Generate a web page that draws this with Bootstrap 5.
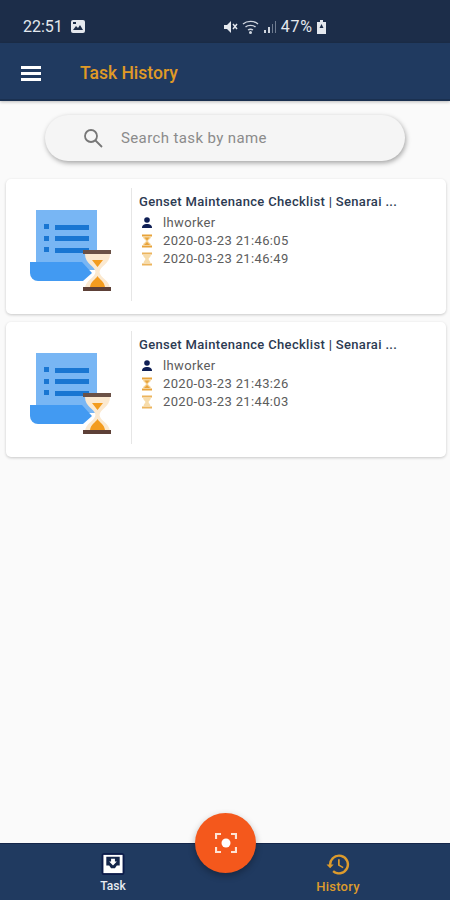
<!DOCTYPE html>
<html>
<head>
    <title>Task History</title>
    <link rel="stylesheet" href="https://cdn.jsdelivr.net/npm/bootstrap@5.3.0/dist/css/bootstrap.min.css">
    <style>
        html, body { height: 100%; }
        body { background: #fafafa; font-family: Roboto, "Liberation Sans", sans-serif; overflow: hidden; }
        .app-shell { height: 900px; }
        .status-strip { height: 43px; background: #1c2d49; color: #e4e8ee; font-size: 16px; padding: 10px 0 0 23px; }
        .status-right { margin-left: 138px; }
        .status-pct { font-size: 16px; letter-spacing: .7px; margin-left: 5px; }
        .app-bar { height: 58px; background: #203a60; padding: 4px 0 0 21px; border-bottom: 2px solid #1a3050; box-shadow: 0 1px 3px rgba(0,0,0,.25); }
        .app-title { color: #e09a26; font-size: 17.5px; font-weight: 500; margin-left: 39px; }
        .search-pill { width: 360px; height: 46px; margin: 14px auto 18px; background: #f5f5f5; border-radius: 23px; box-shadow: 1px 2px 5px rgba(0,0,0,.35); padding-left: 38px; }
        .search-input { background: transparent; border: 0; padding: 0; margin-left: 18px; font-size: 15px; letter-spacing: .38px; box-shadow: none; }
        .search-input::placeholder { color: #8b8b8b; }
        .task-card { width: 440px; height: 135px; margin: 0 0 8px 6px; border: 0; border-radius: 5px; box-shadow: 0 1px 3px rgba(0,0,0,.2); background: #fff; }
        .task-art { width: 125px; padding: 29px 0 0 22px; }
        .task-info { margin: 9px 0 13px; padding: 5px 0 0 7px; border-left: 1px solid #e6e6e6; }
        .task-name { color: #2c3a52; font-size: 13px; font-weight: 500; letter-spacing: .33px; line-height: 18px; margin-bottom: 3px; white-space: nowrap; }
        .task-line { color: #5c5c5c; font-size: 13px; letter-spacing: .35px; line-height: 18px; gap: 10px; padding-left: 2px; }
        .bottom-bar { height: 57px; margin-top: auto; background: #203a60; border-top: 1px solid #14264a; }
        .tab-item { width: 50%; font-size: 12px; font-weight: 500; color: #e8ecf2; padding-top: 9px; line-height: 15px; }
        .tab-label { margin-top: 4px; }
        .tab-task { margin-left: 88px; width: 50px; }
        .tab-history { margin-left: 175px; width: 50px; color: #dd9b2c; font-size: 13px; letter-spacing: .25px; }
        .tab-history .tab-label { margin-top: 3px; }
        .scan-fab { position: absolute; left: 195px; top: 813px; width: 61px; height: 60px; padding: 0; border: 0; border-radius: 50%; background: #f4581c; box-shadow: 0 3px 7px rgba(0,0,0,.3); }
    </style>
</head>
<body>
    <svg width="0" height="0" class="position-absolute">
        <symbol id="glassStart" viewBox="0 0 12 14">
            <path d="M1 .5h10v2H1zM1 11.500h10v2H1z" fill="#e8a33a"/>
            <path d="M2 2.500h8c0 2.500-2.500 3-3 4.500.5 1.500 3 2 3 4.500H2c0-2.500 2.500-3 3-4.500-.5-1.500-3-2-3-4.500z" fill="#f6d498"/>
            <path d="M3.500 3.500h5L6 6.500zM3 11l3-3 3 3z" fill="#e8a33a"/>
        </symbol>
        <symbol id="glassEnd" viewBox="0 0 12 14">
            <path d="M1 .5h10v2H1zM1 11.500h10v2H1z" fill="#ecb45c"/>
            <path d="M2 2.500h8c0 2.500-2 3-2.500 4.500.5 1.500 2 2 2 4.500h-7c0-2.500 1.500-3 2-4.500C4 5.500 2 5 2 2.500z" fill="#f7dcaa"/>
        </symbol>
        <symbol id="taskArt" viewBox="0 0 86 86">
            <path d="M8 2h61v60H8z" fill="#78b6f4"/>
            <path d="M2 54h52l10 11-9 8H10a8 8 0 0 1-8-8z" fill="#429af2"/>
            <path d="M16 16h5v5h-5zM16 28h5v5h-5zM16 39h5v5h-5zM27 17h34v5H27zM27 28h34v5H27zM27 40h34v5H27z" fill="#1976d2"/>
            <path d="M57 46h25c0 10-10 12-10.500 18 .5 6 10.500 8 10.500 17H57c0-9 10-11 10.500-17-.5-6-10.500-8-10.500-18z" fill="#fbe9d0"/>
            <path d="M64 52h11l-5.500 7zM62 79c1-6 5-7 7.500-11 2.500 4 6.500 5 7.500 11z" fill="#f39c1f"/>
            <path d="M55 42h28v4H55z" fill="#6b5146"/>
            <path d="M55 79h28v4H55z" fill="#5d4037"/>
        </symbol>
    </svg>

    <div class="app-shell d-flex flex-column">
        <div class="status-strip d-flex align-items-center">
            <span>22:51</span>
            <svg class="ms-2" width="14" height="13" viewBox="0 0 14 13"><rect width="14" height="13" rx="2" fill="#e4e8ee"/><path d="M2 10l3-4 2 2 2-3 3 5z" fill="#1c2d49"/><rect x="2" y="2" width="3" height="2" fill="#1c2d49"/></svg>
            <div class="status-right d-flex align-items-center">
                <svg width="15" height="14" viewBox="0 0 15 14"><path d="M1 5h3l4-4v12L4 9H1z" fill="#e4e8ee"/><path d="M10 4l4 5M14 4l-4 5" stroke="#e4e8ee" stroke-width="1.500"/></svg>
                <svg class="ms-1" width="17" height="14" viewBox="0 0 17 14" fill="none" stroke="#cfd5de" stroke-width="1.400"><path d="M1 4c4-3.500 11-3.500 15 0M3.500 7c2.500-2.200 7.500-2.200 10 0M6 10c1.500-1 3.500-1 5 0"/><circle cx="8.500" cy="12.500" r=".8" fill="#cfd5de"/></svg>
                <svg class="ms-1" width="13" height="13" viewBox="0 0 13 13"><path d="M1 10h2v3H1zM5 7h2v6H5z" fill="#cfd5de"/><path d="M9 4h1v9H9zM12 1h1v12h-1z" fill="#6f7c90"/></svg>
                <span class="status-pct">47%</span>
                <svg class="ms-1" width="9" height="14" viewBox="0 0 9 14"><path d="M3 0h3v2h3v12H0V2h3z" fill="#e4e8ee"/><path d="M4.500 4 2.500 8h4z" fill="#1c2d49"/></svg>
            </div>
        </div>

        <nav class="app-bar navbar flex-nowrap justify-content-start">
            <svg width="20" height="15" viewBox="0 0 20 15" class="flex-shrink-0"><path d="M0 0h20v3H0zM0 6h20v3H0zM0 12h20v3H0z" fill="#fff"/></svg>
            <span class="app-title">Task History</span>
        </nav>

        <div class="search-pill d-flex align-items-center">
            <svg width="20" height="20" viewBox="0 0 20 20" fill="none" stroke="#777" stroke-width="1.800" class="flex-shrink-0"><circle cx="8" cy="8" r="6"/><path d="M12.500 12.500 19 19"/></svg>
            <input class="form-control search-input" type="text" placeholder="Search task by name">
        </div>

        <div id="taskList"></div>

        <div class="bottom-bar d-flex">
            <div class="tab-item tab-task text-center">
                <svg class="d-block mx-auto" width="24" height="22" viewBox="0 0 24 23"><rect width="24" height="23" rx="3" fill="#0c1c4a"/><path d="M2 2h20v19H2z" fill="#fff"/><path d="M5 4h14v9h-3l-2 3h-4l-2-3H5z" fill="#14264a"/><path d="M10 6h4v3h2l-4 4-4-4h2z" fill="#fff"/></svg>
                <div class="tab-label">Task</div>
            </div>
            <div class="tab-item tab-history text-center">
                <svg class="d-block mx-auto" width="24" height="23" viewBox="0 0 24 24"><path d="M13 1.500a10.500 10.500 0 0 0-10.500 10.500H0l3.800 4 3.700-4H5a8 8 0 1 1 2.700 6l-1.600 1.800A10.500 10.500 0 1 0 13 1.500z" fill="#dd9b2c"/><path d="M12 6.500v6.500l5 3 .8-1.400-4-2.400V6.500z" fill="#dd9b2c"/></svg>
                <div class="tab-label">History</div>
            </div>
        </div>
    </div>

    <button class="scan-fab btn d-flex align-items-center justify-content-center" type="button">
        <svg width="22" height="20" viewBox="0 0 22 20" fill="none" stroke="#fde3d5" stroke-width="2.200"><path d="M1 6V1h5M16 1h5v5M21 14v5h-5M6 19H1v-5"/><circle cx="11" cy="10" r="4.500" fill="#fff" stroke="none"/></svg>
    </button>

    <script>
        const tasks = [
            { user: 'lhworker', start: '2020-03-23 21:46:05', end: '2020-03-23 21:46:49' },
            { user: 'lhworker', start: '2020-03-23 21:43:26', end: '2020-03-23 21:44:03' }
        ];

        document.getElementById('taskList').innerHTML = tasks.map(t => `
            <div class="task-card card flex-row">
                <div class="task-art"><svg width="86" height="86"><use href="#taskArt"/></svg></div>
                <div class="task-info flex-grow-1">
                    <div class="task-name">Genset Maintenance Checklist | Senarai ...</div>
                    <div class="task-line d-flex align-items-center">
                        <svg width="12" height="12" viewBox="0 0 12 12"><circle cx="6" cy="3" r="2.800" fill="#0f1f55"/><path d="M1 11c0-3 2-4 5-4s5 1 5 4z" fill="#0f1f55"/></svg>
                        <span>${t.user}</span>
                    </div>
                    <div class="task-line d-flex align-items-center">
                        <svg width="12" height="14" class="flex-shrink-0"><use href="#glassStart"/></svg>
                        <span>${t.start}</span>
                    </div>
                    <div class="task-line d-flex align-items-center">
                        <svg width="12" height="14" class="flex-shrink-0"><use href="#glassEnd"/></svg>
                        <span>${t.end}</span>
                    </div>
                </div>
            </div>`).join('');
    </script>
    <script src="https://cdn.jsdelivr.net/npm/bootstrap@5.3.0/dist/js/bootstrap.bundle.min.js"></script>
</body>
</html>
